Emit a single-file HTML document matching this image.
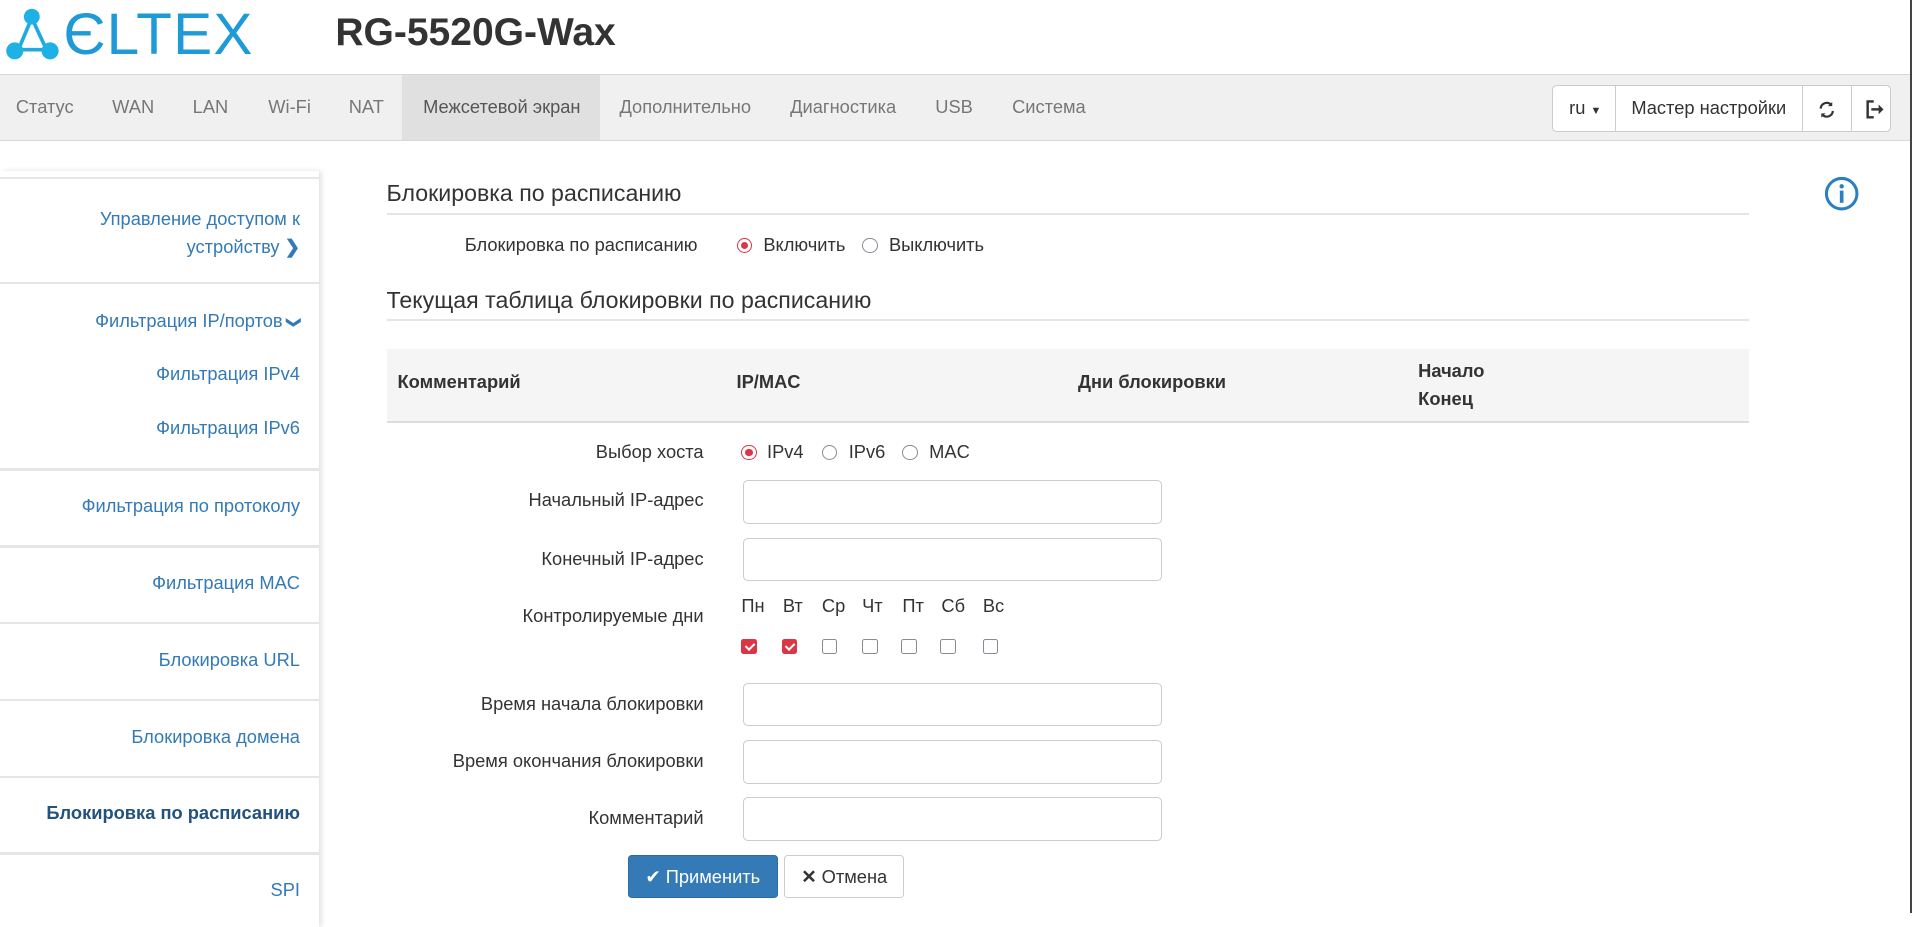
<!DOCTYPE html>
<html><head><meta charset="utf-8">
<style>
html,body{margin:0;padding:0;}
body{zoom:1.2194;width:1568px;height:749px;overflow:hidden;position:relative;background:#fff;font-family:"Liberation Sans",Arial,sans-serif;font-size:15px;color:#333;}
.a{position:absolute;white-space:nowrap;}
.nav{position:absolute;left:0;top:61px;width:1566px;height:53px;background:#f0f0f0;border-top:1px solid #d8d8d8;border-bottom:1px solid #d8d8d8;}
.nav span{position:absolute;top:17px;color:#777;font-size:15px;}
.grp{position:absolute;left:1273px;top:70px;width:276px;height:37px;border:1px solid #ccc;border-radius:4px;background:#fff;}
.grp div{position:absolute;top:0;height:37px;border-left:1px solid #ccc;}
.side{position:absolute;left:0;top:140px;width:262px;height:620px;box-shadow:2px 0 4px rgba(0,0,0,.12);}
.sep{position:absolute;left:0;width:262px;height:2px;background:#e6e6e6;}
.si{position:absolute;right:1322px;color:#337ab7;font-size:15px;text-align:right;white-space:nowrap;}
.hr{position:absolute;left:317px;width:1117px;height:1px;background:#e5e5e5;}
h4{position:absolute;margin:0;font-weight:normal;font-size:19px;color:#333;white-space:nowrap;}
.lbl{position:absolute;right:991px;font-size:15px;color:#333;white-space:nowrap;}
.inp{position:absolute;left:609px;width:342px;height:34px;border:1px solid #ccc;border-radius:4px;background:#fff;}
.r{position:absolute;width:11px;height:11px;border:1.5px solid #8a8a96;border-radius:50%;}
.r.on{border-color:#dc3545;}
.r.on:after{content:"";position:absolute;left:2.5px;top:2.5px;width:6px;height:6px;border-radius:50%;background:#dc3545;}
.cb{position:absolute;top:524px;width:11px;height:11px;border:1.5px solid #8a8a96;border-radius:2px;}
.cb.on{background:#dc3545;border-color:#dc3545;}
.cb.on:after{content:"";position:absolute;left:3.5px;top:0.5px;width:3px;height:6px;border:solid #fff;border-width:0 2px 2px 0;transform:rotate(45deg);}
.th{position:absolute;font-weight:bold;font-size:15px;color:#333;}
</style></head><body>
<svg class="a" style="left:4px;top:6px" width="46" height="44" viewBox="0 0 46 44">
<g stroke="#1fa9df" stroke-width="3"><line x1="22" y1="9" x2="11" y2="35"/><line x1="22" y1="9" x2="34" y2="35"/><line x1="11" y1="35" x2="34" y2="35"/></g>
<circle cx="22" cy="8" r="6.5" fill="#1eb1e6"/><circle cx="8" cy="36" r="7" fill="#1eb1e6"/><circle cx="37" cy="36" r="7" fill="#1eb1e6"/>
</svg>
<div class="a" style="left:52px;top:2px;font-size:48px;line-height:54px;color:#1e9ad6;letter-spacing:1px;">ЄLTEX</div>
<div class="a" style="left:275px;top:9px;font-size:32px;font-weight:bold;color:#333;">RG-5520G-Wax</div>
<div class="a" style="left:1566px;top:0;width:2px;height:749px;background:#444;"></div>

<div class="nav">
<div class="a" style="left:330px;top:0;width:162px;height:53px;background:#e0e0e0"></div>
<span style="left:13px">Статус</span><span style="left:92px">WAN</span><span style="left:158px">LAN</span><span style="left:220px">Wi-Fi</span><span style="left:286px">NAT</span><span style="left:347px;color:#555">Межсетевой экран</span><span style="left:508px">Дополнительно</span><span style="left:648px">Диагностика</span><span style="left:767px">USB</span><span style="left:830px">Система</span>
</div>
<div class="grp">
<span class="a" style="left:13px;top:9px;font-size:15px">ru <span style="font-size:9px">▼</span></span>
<div style="left:51px"></div>
<span class="a" style="left:64px;top:9px;font-size:15px">Мастер настройки</span>
<div style="left:204px"></div>
<svg class="a" style="left:216px;top:11px" width="16" height="16" viewBox="0 0 16 16"><path d="M3 7a5 5 0 0 1 8.5-3.2M13 9a5 5 0 0 1-8.5 3.2" stroke="#333" stroke-width="1.8" fill="none"/><path d="M12.5 1.5v3.5H9z M3.5 14.5V11H7z" fill="#333"/></svg>
<div style="left:244px"></div>
<svg class="a" style="left:255px;top:10px" width="18" height="17" viewBox="0 0 18 17"><path d="M8 2H3v13h5" stroke="#333" stroke-width="2" fill="none"/><path d="M6 8.5h7" stroke="#333" stroke-width="2"/><path d="M12 4.5l4 4-4 4z" fill="#333"/></svg>
</div>

<div class="side"></div>
<div class="sep" style="top:145px"></div>
<div class="si" style="top:168px;line-height:23px">Управление доступом к<br>устройству <b>❯</b></div>
<div class="sep" style="top:231px"></div>
<div class="si" style="top:254px">Фильтрация IP/портов <b style="display:inline-block;font-size:12px;transform:rotate(90deg)">❯</b></div>
<div class="si" style="top:298px">Фильтрация IPv4</div>
<div class="si" style="top:342px">Фильтрация IPv6</div>
<div class="sep" style="top:384px"></div>
<div class="si" style="top:406px">Фильтрация по протоколу</div>
<div class="sep" style="top:447px"></div>
<div class="si" style="top:469px">Фильтрация MAC</div>
<div class="sep" style="top:510px"></div>
<div class="si" style="top:532px">Блокировка URL</div>
<div class="sep" style="top:573px"></div>
<div class="si" style="top:595px">Блокировка домена</div>
<div class="sep" style="top:636px"></div>
<div class="si" style="top:658px;font-weight:bold;color:#23527c">Блокировка по расписанию</div>
<div class="sep" style="top:699px"></div>
<div class="si" style="top:721px">SPI</div>

<svg class="a" style="left:1496px;top:144px" width="29" height="29" viewBox="0 0 29 29"><circle cx="14.5" cy="14.5" r="12.5" stroke="#2a7fc4" stroke-width="2.5" fill="none"/><circle cx="14.5" cy="8.5" r="1.8" fill="#2a7fc4"/><rect x="13" y="12" width="3" height="10" fill="#2a7fc4"/></svg>

<h4 style="left:317px;top:148px">Блокировка по расписанию</h4>
<div class="hr" style="top:175px"></div>
<div class="lbl" style="top:192px;right:996px">Блокировка по расписанию</div>
<div class="r on" style="left:604px;top:195px"></div><span class="a" style="left:626px;top:192px">Включить</span>
<div class="r" style="left:707px;top:195px"></div><span class="a" style="left:729px;top:192px">Выключить</span>
<h4 style="left:317px;top:235px">Текущая таблица блокировки по расписанию</h4>
<div class="hr" style="top:262px"></div>

<div class="a" style="left:317px;top:286px;width:1117px;height:59px;background:#f5f5f5;border-bottom:2px solid #ddd"></div>
<div class="th" style="left:326px;top:304px">Комментарий</div>
<div class="th" style="left:604px;top:304px">IP/MAC</div>
<div class="th" style="left:884px;top:304px">Дни блокировки</div>
<div class="th" style="left:1163px;top:293px;line-height:23px">Начало<br>Конец</div>

<div class="lbl" style="top:362px">Выбор хоста</div>
<div class="r on" style="left:608px;top:365px"></div><span class="a" style="left:629px;top:362px">IPv4</span>
<div class="r" style="left:674px;top:365px"></div><span class="a" style="left:696px;top:362px">IPv6</span>
<div class="r" style="left:740px;top:365px"></div><span class="a" style="left:762px;top:362px">MAC</span>

<div class="lbl" style="top:401px">Начальный IP-адрес</div><div class="inp" style="top:394px"></div>
<div class="lbl" style="top:449px">Конечный IP-адрес</div><div class="inp" style="top:441px"></div>
<div class="lbl" style="top:496px">Контролируемые дни</div>
<span class="a" style="left:608px;top:488px">Пн</span><span class="a" style="left:642px;top:488px">Вт</span><span class="a" style="left:674px;top:488px">Ср</span><span class="a" style="left:707px;top:488px">Чт</span><span class="a" style="left:740px;top:488px">Пт</span><span class="a" style="left:772px;top:488px">Сб</span><span class="a" style="left:806px;top:488px">Вс</span>
<div class="cb on" style="left:608px"></div><div class="cb on" style="left:641px"></div><div class="cb" style="left:674px"></div><div class="cb" style="left:707px"></div><div class="cb" style="left:739px"></div><div class="cb" style="left:771px"></div><div class="cb" style="left:806px"></div>
<div class="lbl" style="top:568px">Время начала блокировки</div><div class="inp" style="top:560px"></div>
<div class="lbl" style="top:615px">Время окончания блокировки</div><div class="inp" style="top:607px"></div>
<div class="lbl" style="top:662px">Комментарий</div><div class="inp" style="top:654px"></div>

<div class="a" style="left:515px;top:701px;width:121px;height:34px;background:#337ab7;border:1px solid #2e6da4;border-radius:3px;color:#fff;line-height:34px;text-align:center;font-size:15px">✔ Применить</div>
<div class="a" style="left:643px;top:701px;width:97px;height:34px;background:#fff;border:1px solid #ccc;border-radius:3px;color:#333;line-height:34px;text-align:center;font-size:15px"><b>✕</b> Отмена</div>
</body></html>
